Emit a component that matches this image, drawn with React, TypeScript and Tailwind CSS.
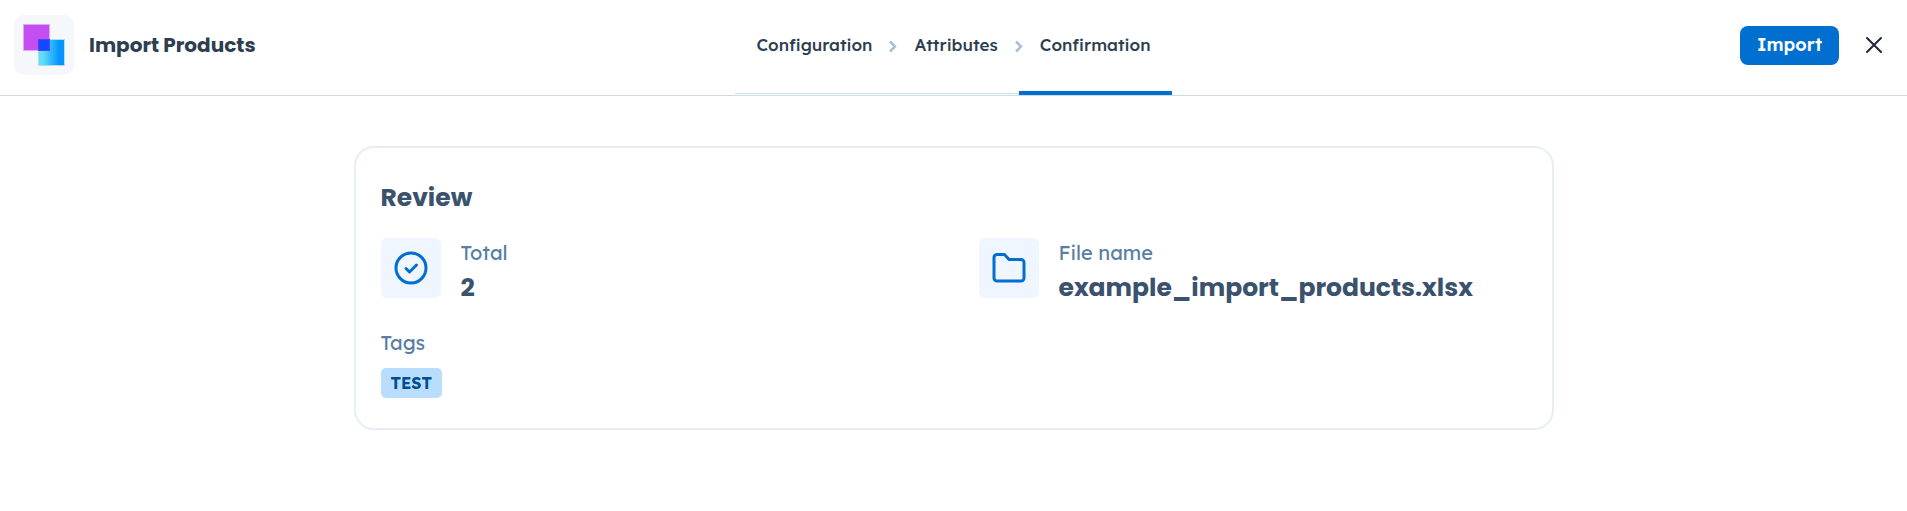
import type { ReactNode } from 'react'
import { clsx } from 'clsx'

const steps = ['Configuration', 'Attributes', 'Confirmation']

interface ReviewItemProps {
  icon: ReactNode
  label: string
  value: string
}

function Logo() {
  return (
    <div className="flex size-[60px] items-center justify-center rounded-[10px] bg-[#f5f7fb]">
      <svg width="42" height="42" viewBox="0 0 42 42" aria-hidden="true">
        <defs>
          <linearGradient id="logo-blue" x1="0" x2="1">
            <stop offset="0.15" stopColor="#63dcf9" />
            <stop offset="0.8" stopColor="#0595fe" />
          </linearGradient>
        </defs>
        <rect x="0" y="0" width="27" height="27" fill="#e0a5f7" />
        <rect x="1" y="1" width="25" height="25" fill="#c44ef1" />
        <rect x="15" y="15" width="27" height="27" fill="#a5e3fb" />
        <rect x="16" y="16" width="25" height="25" fill="url(#logo-blue)" />
        <path d="M15 15h12v12H15z" fill="#4649e8" />
        <path d="M16 16h10v10H16z" fill="#1348ff" />
      </svg>
    </div>
  )
}

function ReviewItem({ icon, label, value }: ReviewItemProps) {
  return (
    <div className="flex gap-5">
      <div className="flex size-[60px] shrink-0 items-center justify-center rounded-md bg-[#eff6ff] text-[#006fcf]">
        {icon}
      </div>
      <dl>
        <dt className="text-xl leading-[30px] text-[#587ea3]">{label}</dt>
        <dd className="font-['Poppins','Inter',sans-serif] text-[25px] leading-10 font-bold text-[#3a526d]">
          {value}
        </dd>
      </dl>
    </div>
  )
}

export default function App() {
  return (
    <div className="min-h-screen bg-white font-['Lexend_Deca','Lexend','Inter',sans-serif]">
      <header className="grid h-24 grid-cols-[1fr_auto_1fr] border-b border-[#cfdbe6] text-[#2d3e50]">
        <div className="flex items-center gap-[15px] pb-[5px] pl-3.5">
          <Logo />
          <h1 className="font-['Poppins','Inter',sans-serif] text-xl font-bold">Import Products</h1>
        </div>

        <nav className="flex">
          {steps.map((step, i) => (
            <div
              key={step}
              className={clsx(
                'relative flex items-center px-[21px] text-[17px] font-medium',
                i === 2 ? 'border-b-4 border-[#006fcf] pb-0.5' : 'mb-px border-b border-[#cfdbe6] pb-1'
              )}
            >
              <a href="#" aria-current={i === 2 ? 'step' : undefined}>
                {step}
              </a>
              {i < 2 && (
                <svg
                  className="absolute top-10 -right-1 z-10"
                  width="8"
                  height="13"
                  viewBox="0 0 8 13"
                  fill="none"
                  stroke="#a9bfd4"
                  strokeWidth="2.5"
                  aria-hidden="true"
                >
                  <path d="M1 1.5 6 6.5 1 11.5" />
                </svg>
              )}
            </div>
          ))}
        </nav>

        <div className="flex items-center justify-end gap-5 pr-[18px] pb-[5px]">
          <button
            type="button"
            className="h-[39px] rounded-lg bg-[#006fcf] px-[17px] text-lg font-semibold text-white"
          >
            Import
          </button>
          <button type="button" aria-label="Close" className="p-1.5 text-[#1f2937]">
            <svg width="18" height="18" viewBox="0 0 18 18" fill="none" stroke="currentColor" strokeWidth="2" strokeLinecap="round">
              <path d="M2 2 16 16M16 2 2 16" />
            </svg>
          </button>
        </div>
      </header>

      <main className="px-6 pt-[50px]">
        <section className="mx-auto max-w-[1200px] rounded-[20px] border-2 border-[#e9edf5] px-[25px] pt-[30px] pb-[30px]">
          <h2 className="font-['Poppins','Inter',sans-serif] text-[25px] leading-10 font-bold text-[#3a526d]">
            Review
          </h2>

          <div className="mt-5 grid grid-cols-2 gap-[50px]">
            <ReviewItem
              label="Total"
              value="2"
              icon={
                <svg width="36" height="36" viewBox="0 0 36 36" fill="none" stroke="currentColor" strokeWidth="3" strokeLinecap="round" strokeLinejoin="round">
                  <circle cx="18" cy="18" r="15" />
                  <path d="m13 18.5 3.5 3.5 7-7" />
                </svg>
              }
            />
            <ReviewItem
              label="File name"
              value="example_import_products.xlsx"
              icon={
                <svg width="36" height="36" viewBox="0 0 36 36" fill="none" stroke="currentColor" strokeWidth="3" strokeLinecap="round" strokeLinejoin="round">
                  <path d="M33 12v16a3 3 0 0 1-3 3H6a3 3 0 0 1-3-3V7.5a3 3 0 0 1 3-3h7.5l4.5 5h12a3 3 0 0 1 3 3z" />
                </svg>
              }
            />
          </div>

          <h3 className="mt-5 text-xl leading-[30px] text-[#587ea3]">Tags</h3>
          <span className="mt-2.5 inline-block rounded-[5px] bg-[#b8ddff] px-2.5 text-base leading-[30px] font-bold text-[#004e92]">
            TEST
          </span>
        </section>
      </main>
    </div>
  )
}
